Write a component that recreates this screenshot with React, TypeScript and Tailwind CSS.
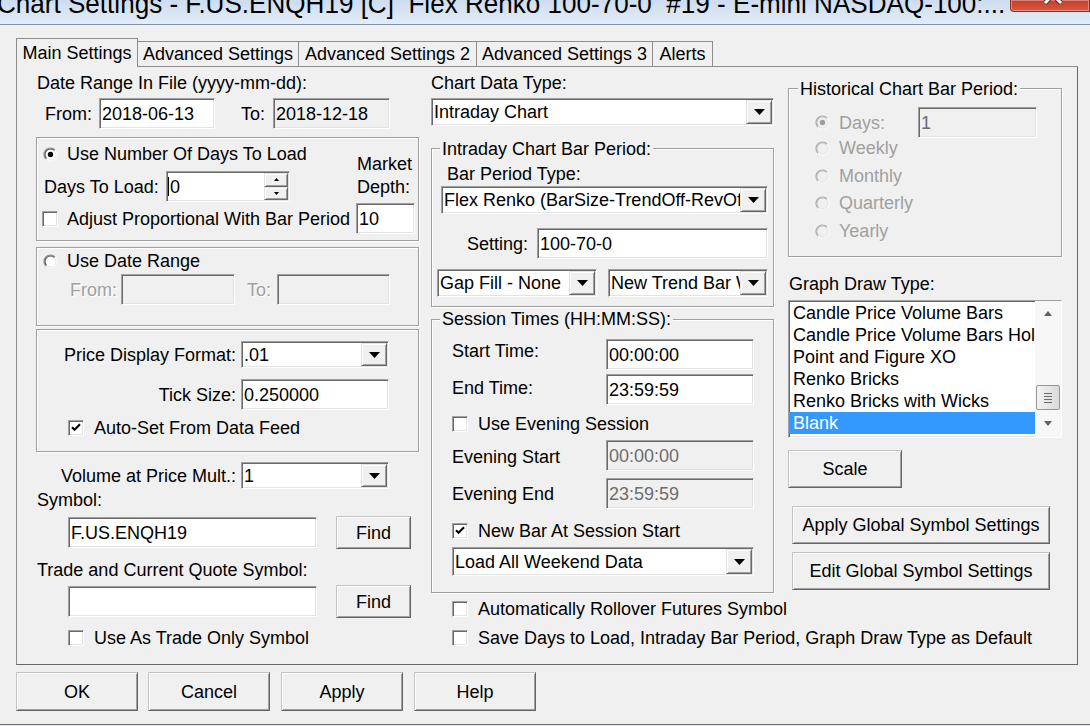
import React from "react";

const SUNKEN =
  "border border-t-[#a0a0a0] border-l-[#a0a0a0] border-b-[#ffffff] border-r-[#ffffff] shadow-[inset_1px_1px_0_#696969,inset_-1px_-1px_0_#e3e3e3]";
const RAISED =
  "border border-t-[#e3e3e3] border-l-[#e3e3e3] border-b-[#696969] border-r-[#696969] shadow-[inset_1px_1px_0_#ffffff,inset_-1px_-1px_0_#a0a0a0]";
const BUTTON =
  "border border-t-[#c4c4c4] border-l-[#c4c4c4] border-b-[#646464] border-r-[#646464] shadow-[inset_1px_1px_0_#ffffff,inset_-1px_-1px_0_#a0a0a0] bg-[#f0f0f0]";
const GROUP = "border border-[#a0a0a0] shadow-[inset_1px_1px_0_#ffffff,1px_1px_0_#ffffff]";
const DIS = "text-[#a0a0a0] [text-shadow:1px_1px_0_#ffffff]";

function Tri() {
  return (
    <svg width="11" height="6" viewBox="0 0 11 6">
      <polygon points="0,0 11,0 5.5,6" fill="#000" />
    </svg>
  );
}

function TextBox({
  cls = "",
  value,
  disabled,
  gray,
}: {
  cls?: string;
  value: string;
  disabled?: boolean;
  gray?: boolean;
}) {
  return (
    <div
      className={`${SUNKEN} ${disabled ? "bg-[#f0f0f0]" : "bg-white"} ${
        gray ? "text-[#6d6d6d]" : ""
      } h-[31px] shrink-0 flex items-center pl-[2px] overflow-hidden whitespace-nowrap ${cls}`}
    >
      {value}
    </div>
  );
}

function Select({ cls = "", value }: { cls?: string; value: string }) {
  return (
    <div className={`${SUNKEN} bg-white shrink-0 flex items-stretch ${cls}`}>
      <div className="flex-1 min-w-0 overflow-hidden whitespace-nowrap pl-[2px] flex items-center">
        {value}
      </div>
      <div
        className={`${RAISED} bg-[#f0f0f0] w-[26px] my-[1px] mr-[1px] shrink-0 flex items-center justify-center`}
      >
        <Tri />
      </div>
    </div>
  );
}

function Btn({ cls = "", children }: { cls?: string; children: React.ReactNode }) {
  return (
    <div className={`${BUTTON} shrink-0 flex items-center justify-center whitespace-nowrap ${cls}`}>
      {children}
    </div>
  );
}

function Check({ checked }: { checked?: boolean }) {
  return (
    <div className={`${SUNKEN} bg-white w-[16px] h-[16px] shrink-0 flex items-start justify-start`}>
      {checked && (
        <svg width="12" height="12" viewBox="0 0 12 12" className="ml-[1px] mt-[1px]">
          <path d="M2 5.2 L4.6 7.8 L10 2.2" stroke="#000" strokeWidth="2.1" fill="none" />
        </svg>
      )}
    </div>
  );
}

function Radio({ on, disabled }: { on?: boolean; disabled?: boolean }) {
  return (
    <svg width="15" height="15" viewBox="0 0 15 15" className="shrink-0">
      <circle cx="7.5" cy="7.5" r="6.5" fill={disabled ? "#f0f0f0" : "#ffffff"} />
      <path d="M2.9 12.1 A6.5 6.5 0 0 1 12.1 2.9" stroke={disabled ? "#a8a8a8" : "#8a8a8a"} strokeWidth="1.2" fill="none" />
      <path d="M3.6 11.4 A5.5 5.5 0 0 1 11.4 3.6" stroke={disabled ? "#c4c4c4" : "#505050"} strokeWidth="1.1" fill="none" />
      <path d="M12.1 2.9 A6.5 6.5 0 0 1 2.9 12.1" stroke="#ffffff" fill="none" />
      <path d="M11.4 3.6 A5.5 5.5 0 0 1 3.6 11.4" stroke="#e3e3e3" fill="none" />
      {on && <circle cx="7.5" cy="7.5" r="2.7" fill={disabled ? "#a0a0a0" : "#000000"} />}
    </svg>
  );
}

function Group({
  label,
  cls = "",
  labelCls = "",
  children,
}: {
  label: string;
  cls?: string;
  labelCls?: string;
  children: React.ReactNode;
}) {
  return (
    <div className={`${GROUP} relative shrink-0 flex flex-col ${cls}`}>
      <div
        className={`absolute bg-[#f0f0f0] px-[2px] h-[20px] leading-[20px] whitespace-nowrap ${labelCls}`}
      >
        {label}
      </div>
      {children}
    </div>
  );
}

function SpinBox() {
  return (
    <div className={`${SUNKEN} bg-white w-[124px] h-[31px] shrink-0 flex`}>
      <div className="flex-1 flex items-center pl-[1px]">
        <span className="w-[1px] h-[19px] bg-black mr-[1px]"></span>0
      </div>
      <div className="w-[24px] flex flex-col my-[1px] mr-[1px]">
        <div className={`${RAISED} bg-[#f0f0f0] flex-1 flex items-center justify-center`}>
          <svg width="5" height="3" viewBox="0 0 5 3">
            <polygon points="2.5,0 5,3 0,3" fill="#000" />
          </svg>
        </div>
        <div className={`${RAISED} bg-[#f0f0f0] flex-1 flex items-center justify-center`}>
          <svg width="5" height="3" viewBox="0 0 5 3">
            <polygon points="0,0 5,0 2.5,3" fill="#000" />
          </svg>
        </div>
      </div>
    </div>
  );
}

function LeftColumn() {
  return (
    <div className="w-[383px] shrink-0 flex flex-col pt-[6px]">
      <div className="h-[20px] pl-[1px] whitespace-nowrap">Date Range In File (yyyy-mm-dd):</div>
      <div className="mt-[5px] h-[31px] flex items-center">
        <div className="w-[63px] pl-[9px] shrink-0">From:</div>
        <TextBox cls="w-[116px]" value="2018-06-13" />
        <div className="w-[58px] pl-[26px] shrink-0">To:</div>
        <TextBox cls="w-[117px]" value="2018-12-18" disabled />
      </div>

      <div className={`${GROUP} mt-[8px] h-[104px] shrink-0 flex`}>
        <div className="w-[319px] shrink-0 flex flex-col">
          <div className="mt-[6px] h-[20px] flex items-center pl-[6px]">
            <Radio on />
            <span className="ml-[9px] whitespace-nowrap">Use Number Of Days To Load</span>
          </div>
          <div className="mt-[7px] h-[31px] flex items-center">
            <div className="w-[129px] pl-[7px] shrink-0 whitespace-nowrap">Days To Load:</div>
            <SpinBox />
          </div>
          <div className="mt-[7px] h-[20px] flex items-center pl-[5px]">
            <Check />
            <span className="ml-[9px] whitespace-nowrap">Adjust Proportional With Bar Period</span>
          </div>
        </div>
        <div className="w-[59px] shrink-0 flex flex-col">
          <div className="mt-[16px] h-[20px] pl-[1px]">Market</div>
          <div className="mt-[3px] h-[20px] pl-[1px]">Depth:</div>
          <TextBox cls="mt-[6px] w-[59px]" value="10" />
        </div>
      </div>

      <div className={`${GROUP} mt-[6px] h-[79px] shrink-0 flex flex-col`}>
        <div className="mt-[3px] h-[20px] flex items-center pl-[6px]">
          <Radio />
          <span className="ml-[9px]">Use Date Range</span>
        </div>
        <div className="mt-[3px] h-[31px] flex items-center">
          <div className={`w-[84px] pl-[33px] shrink-0 ${DIS}`}>From:</div>
          <TextBox cls="w-[114px]" disabled value="" />
          <div className={`w-[42px] pl-[12px] shrink-0 ${DIS}`}>To:</div>
          <TextBox cls="w-[113px]" disabled value="" />
        </div>
      </div>

      <div className={`${GROUP} mt-[3px] h-[123px] shrink-0 flex flex-col`}>
        <div className="mt-[11px] h-[27px] flex items-center">
          <div className="w-[204px] pr-[5px] shrink-0 text-right whitespace-nowrap">Price Display Format:</div>
          <Select cls="w-[148px] h-[27px]" value=".01" />
        </div>
        <div className="mt-[11px] h-[31px] flex items-center">
          <div className="w-[204px] pr-[5px] shrink-0 text-right">Tick Size:</div>
          <TextBox cls="w-[148px]" value="0.250000" />
        </div>
        <div className="mt-[8px] h-[20px] flex items-center pl-[31px]">
          <Check checked />
          <span className="ml-[10px] whitespace-nowrap">Auto-Set From Data Feed</span>
        </div>
      </div>

      <div className="mt-[10px] h-[27px] flex items-center">
        <div className="w-[205px] pr-[5px] shrink-0 text-right whitespace-nowrap">Volume at Price Mult.:</div>
        <Select cls="w-[148px] h-[27px]" value="1" />
      </div>
      <div className="mt-[1px] h-[20px] pl-[1px]">Symbol:</div>
      <div className="mt-[7px] h-[31px] flex items-center pl-[32px]">
        <TextBox cls="w-[249px]" value="F.US.ENQH19" />
        <Btn cls="ml-[19px] w-[75px] h-[33px]">Find</Btn>
      </div>
      <div className="mt-[12px] h-[20px] pl-[1px] whitespace-nowrap">Trade and Current Quote Symbol:</div>
      <div className="mt-[6px] h-[31px] flex items-center pl-[32px]">
        <TextBox cls="w-[249px]" value="" />
        <Btn cls="ml-[19px] w-[75px] h-[33px]">Find</Btn>
      </div>
      <div className="mt-[11px] h-[20px] flex items-center pl-[32px]">
        <Check />
        <span className="ml-[10px] whitespace-nowrap">Use As Trade Only Symbol</span>
      </div>
    </div>
  );
}

function MiddleColumn() {
  return (
    <div className="w-[343px] ml-[12px] shrink-0 flex flex-col pt-[6px]">
      <div className="h-[20px]">Chart Data Type:</div>
      <Select cls="mt-[5px] w-[343px] h-[28px]" value="Intraday Chart" />

      <Group label="Intraday Chart Bar Period:" cls="mt-[22px] h-[159px]" labelCls="top-[-10px] left-[8px]">
        <div className="mt-[15px] h-[20px] pl-[15px]">Bar Period Type:</div>
        <Select cls="mt-[2px] ml-[9px] w-[327px] h-[28px]" value="Flex Renko (BarSize-TrendOff-RevOff)" />
        <div className="mt-[14px] h-[31px] flex items-center">
          <div className="w-[105px] pr-[9px] shrink-0 text-right">Setting:</div>
          <TextBox cls="w-[231px]" value="100-70-0" />
        </div>
        <div className="mt-[10px] h-[28px] flex items-center pl-[5px]">
          <Select cls="w-[160px] h-[28px]" value="Gap Fill - None" />
          <Select cls="ml-[11px] w-[160px] h-[28px]" value="New Trend Bar When Exceeded" />
        </div>
      </Group>

      <Group label="Session Times (HH:MM:SS):" cls="mt-[12px] h-[274px]" labelCls="top-[-11px] left-[8px]">
        <div className="mt-[19px] h-[31px] flex items-start">
          <div className="w-[174px] pl-[20px] mt-[2px] h-[20px] shrink-0">Start Time:</div>
          <TextBox cls="w-[148px]" value="00:00:00" />
        </div>
        <div className="mt-[4px] h-[31px] flex items-start">
          <div className="w-[174px] pl-[20px] mt-[4px] h-[20px] shrink-0">End Time:</div>
          <TextBox cls="w-[148px]" value="23:59:59" />
        </div>
        <div className="mt-[9px] h-[20px] flex items-center pl-[20px]">
          <Check />
          <span className="ml-[10px] whitespace-nowrap">Use Evening Session</span>
        </div>
        <div className="mt-[6px] h-[31px] flex items-start">
          <div className="w-[174px] pl-[20px] mt-[7px] h-[20px] shrink-0">Evening Start</div>
          <TextBox cls="w-[148px]" value="00:00:00" disabled gray />
        </div>
        <div className="mt-[7px] h-[31px] flex items-start">
          <div className="w-[174px] pl-[20px] mt-[6px] h-[20px] shrink-0">Evening End</div>
          <TextBox cls="w-[148px]" value="23:59:59" disabled gray />
        </div>
        <div className="mt-[12px] h-[20px] flex items-center pl-[20px]">
          <Check checked />
          <span className="ml-[10px] whitespace-nowrap">New Bar At Session Start</span>
        </div>
        <Select cls="mt-[6px] ml-[20px] w-[302px] h-[29px]" value="Load All Weekend Data" />
      </Group>

      <div className="mt-[6px] h-[20px] flex items-center pl-[21px] whitespace-nowrap">
        <Check />
        <span className="ml-[10px]">Automatically Rollover Futures Symbol</span>
      </div>
      <div className="mt-[9px] h-[20px] flex items-center pl-[21px] whitespace-nowrap">
        <Check />
        <span className="ml-[10px]">Save Days to Load, Intraday Bar Period, Graph Draw Type as Default</span>
      </div>
    </div>
  );
}

function RadioRow({ cls, label }: { cls: string; label: string }) {
  return (
    <div className={`h-[20px] flex items-center pl-[26px] ${cls}`}>
      <Radio disabled />
      <span className="ml-[9px] text-[#a0a0a0]">{label}</span>
    </div>
  );
}

function Scrollbar() {
  return (
    <div className="w-[26px] shrink-0 flex flex-col bg-[#f7f7f7]">
      <div className="h-[24px] shrink-0 flex items-center justify-center">
        <svg width="8" height="5" viewBox="0 0 8 5">
          <polygon points="4,0 8,5 0,5" fill="#606060" />
        </svg>
      </div>
      <div className="h-[60px] shrink-0"></div>
      <div className="h-[25px] shrink-0 mx-[1px] rounded-[2px] border border-[#979797] bg-gradient-to-r from-[#f3f3f3] to-[#dadada] flex flex-col items-center justify-center gap-[2px]">
        <div className="w-[8px] h-[1px] bg-[#6a6a6a]"></div>
        <div className="w-[8px] h-[1px] bg-[#6a6a6a]"></div>
        <div className="w-[8px] h-[1px] bg-[#6a6a6a]"></div>
        <div className="w-[8px] h-[1px] bg-[#6a6a6a]"></div>
      </div>
      <div className="flex-1 flex items-center justify-center">
        <svg width="8" height="5" viewBox="0 0 8 5">
          <polygon points="0,0 8,0 4,5" fill="#606060" />
        </svg>
      </div>
    </div>
  );
}

function RightColumn() {
  const items = [
    "Candle Price Volume Bars",
    "Candle Price Volume Bars Hollow",
    "Point and Figure XO",
    "Renko Bricks",
    "Renko Bricks with Wicks",
    "Blank",
  ];
  return (
    <div className="w-[274px] ml-[14px] shrink-0 flex flex-col">
      <Group label="Historical Chart Bar Period:" cls="mt-[21px] h-[169px]" labelCls="top-[-10px] left-[9px]">
        <div className="mt-[18px] h-[31px] flex items-center pl-[26px]">
          <Radio on disabled />
          <span className="ml-[9px] w-[79px] shrink-0 text-[#a0a0a0]">Days:</span>
          <TextBox cls="w-[119px]" value="1" disabled gray />
        </div>
        <RadioRow cls="mt-0" label="Weekly" />
        <RadioRow cls="mt-[8px]" label="Monthly" />
        <RadioRow cls="mt-[7px]" label="Quarterly" />
        <RadioRow cls="mt-[8px]" label="Yearly" />
      </Group>
      <div className="mt-[17px] h-[20px] pl-[1px]">Graph Draw Type:</div>
      <div className={`${SUNKEN} bg-white mt-[6px] h-[138px] w-[274px] shrink-0 flex`}>
        <div className="flex-1 min-w-0 pt-[1px] flex flex-col">
          {items.map((it, i) => (
            <div
              key={it}
              className={`h-[22px] shrink-0 flex items-center pl-[4px] whitespace-nowrap overflow-hidden ${
                i === 5 ? "bg-[#3399ff] text-white" : ""
              }`}
            >
              {it}
            </div>
          ))}
        </div>
        <Scrollbar />
      </div>
      <Btn cls="mt-[12px] w-[114px] h-[38px]">Scale</Btn>
      <Btn cls="mt-[18px] ml-[4px] w-[258px] h-[38px]">Apply Global Symbol Settings</Btn>
      <Btn cls="mt-[8px] ml-[4px] w-[258px] h-[38px]">Edit Global Symbol Settings</Btn>
    </div>
  );
}

export default function App() {
  return (
    <div className="w-[1090px] h-[726px] overflow-hidden bg-[#f0f0f0] flex flex-col font-['Liberation_Sans',Arial,sans-serif] text-[18px] leading-[20px] text-black">
      {/* title bar */}
      <div className="h-[24px] shrink-0 flex bg-gradient-to-b from-[#cddcef] to-[#e3edf8] overflow-hidden">
        <div className="flex-1 min-w-0 overflow-hidden">
          <div className="origin-top-left scale-x-[0.931] whitespace-pre text-[28px] leading-[28px] mt-[-10px] ml-[-3px]">
            {"Chart Settings - F.US.ENQH19 [C]  Flex Renko 100-70-0  #19 - E-mini NASDAQ-100:..."}
          </div>
        </div>
        <div className="w-[80px] h-[12px] shrink-0 rounded-bl-[4px] border border-t-0 border-[#8d2d1f] bg-gradient-to-b from-[#c33d2b] to-[#d9573f] shadow-[inset_0_0_0_1px_rgba(255,255,255,0.35)] overflow-hidden">
          <svg width="80" height="12" viewBox="0 0 80 12">
            <path d="M34 3 L50 -13 M50 3 L34 -13" stroke="#6e1f14" strokeWidth="5" />
            <path d="M34 3 L50 -13 M50 3 L34 -13" stroke="#ffffff" strokeWidth="3" />
          </svg>
        </div>
      </div>
      <div className="h-[1px] shrink-0 bg-[#7f93ad]"></div>

      {/* tabs */}
      <div className="mt-[13px] ml-[16px] w-[1062px] h-[29px] shrink-0 flex items-end">
        <div className="h-[29px] w-[122px] shrink-0 border-t border-l border-r border-[#8d8d8d] flex items-center justify-center pb-[1px] whitespace-nowrap">
          Main Settings
        </div>
        <div className="h-[26px] w-[161px] shrink-0 border-t border-r border-b border-[#8d8d8d] flex items-center justify-center whitespace-nowrap">
          Advanced Settings
        </div>
        <div className="h-[26px] w-[178px] shrink-0 border-t border-r border-b border-[#8d8d8d] flex items-center justify-center whitespace-nowrap">
          Advanced Settings 2
        </div>
        <div className="h-[26px] w-[176px] shrink-0 border-t border-r border-b border-[#8d8d8d] flex items-center justify-center whitespace-nowrap">
          Advanced Settings 3
        </div>
        <div className="h-[26px] w-[60px] shrink-0 border-t border-r border-b border-[#8d8d8d] flex items-center justify-center whitespace-nowrap">
          Alerts
        </div>
        <div className="flex-1 border-b border-[#8d8d8d]"></div>
      </div>

      {/* panel */}
      <div className="ml-[16px] w-[1062px] h-[598px] shrink-0 border-l border-r border-b border-l-[#8d8d8d] border-r-[#696969] border-b-[#696969] flex pl-[19px]">
        <LeftColumn />
        <MiddleColumn />
        <RightColumn />
      </div>

      {/* bottom buttons */}
      <div className="mt-[7px] ml-[16px] h-[39px] shrink-0 flex">
        <Btn cls="w-[122px] h-[39px]">OK</Btn>
        <Btn cls="ml-[10px] w-[122px] h-[39px]">Cancel</Btn>
        <Btn cls="ml-[11px] w-[122px] h-[39px]">Apply</Btn>
        <Btn cls="ml-[11px] w-[122px] h-[39px]">Help</Btn>
      </div>

      <div className="mt-auto h-[2px] shrink-0 border-t border-[#707070] bg-[#dfe8f2]"></div>
    </div>
  );
}
